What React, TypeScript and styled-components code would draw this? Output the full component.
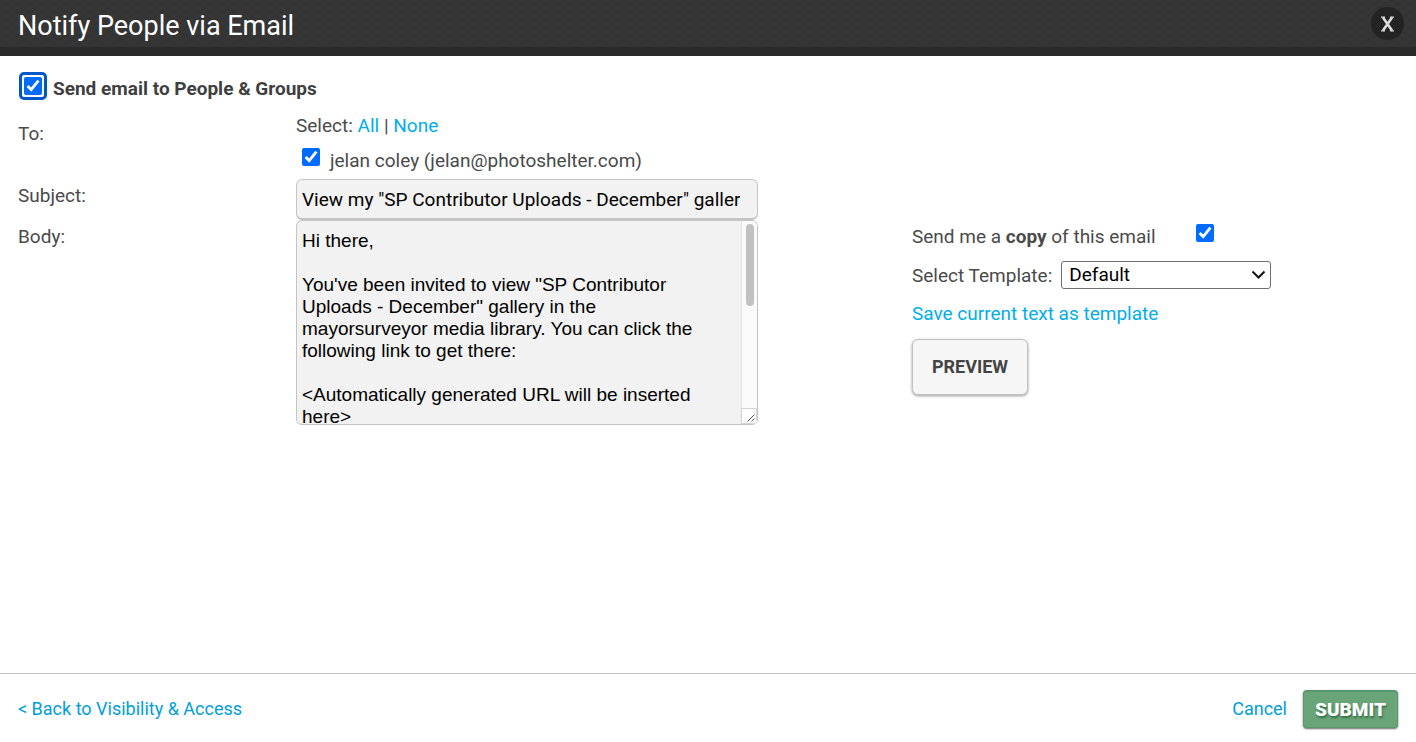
import React, { useState } from 'react';
import styled, { createGlobalStyle } from 'styled-components';

const GlobalStyle = createGlobalStyle`
  *, *::before, *::after { box-sizing: border-box; }
  body {
    margin: 0;
    background: #fff;
    color: #4a4a4a;
    font: 19px/26px Roboto, "Liberation Sans", sans-serif;
  }
`;

const Dialog = styled.form`
  display: flex;
  flex-direction: column;
  min-height: 100vh;
`;

const Header = styled.header`
  display: flex;
  align-items: flex-start;
  justify-content: space-between;
  height: 56px;
  padding: 7px 12px 0 18px;
  border-bottom: 9px solid #2a2a2a;
  background-color: #373737;
  background-image:
    radial-gradient(ellipse at center, #323232 10%, transparent 60%),
    radial-gradient(ellipse at center, #323232 10%, transparent 60%);
  background-size: 12px 8px;
  background-position: 0 0, 6px 4px;
`;

const Title = styled.h1`
  margin: 0;
  color: #fff;
  font-size: 27px;
  font-weight: 400;
  line-height: 38px;
`;

const CloseButton = styled.button`
  display: flex;
  align-items: center;
  justify-content: center;
  width: 33px;
  height: 33px;
  padding: 0;
  border: 0;
  border-radius: 50%;
  background: #232323;
`;

const Main = styled.main`
  flex: 1;
  padding: 16px 18px;
`;

const Check = styled.input.attrs({ type: 'checkbox' })`
  display: block;
  flex: none;
  width: 18px;
  height: 18px;
  margin: 0;
  accent-color: #006bff;
`;

const FocusRing = styled.span`
  flex: none;
  padding: 2px;
  border: 3px solid #0058c8;
  border-radius: 5px;
`;

const SendToggle = styled.label`
  display: flex;
  align-items: flex-start;
  gap: 6px;
  height: 30px;
  padding-left: 1px;
  font-weight: 700;
  color: #3f3f3f;
`;

const SendText = styled.span`
  padding-top: 4px;
`;

const Columns = styled.div`
  display: grid;
  grid-template-columns: 278fr 616fr 486fr;
`;

const FieldLabel = styled.label<{ $pad: number }>`
  padding-top: ${(p) => p.$pad}px;
`;

const Recipients = styled.div`
  height: 77px;
  padding-top: 11px;
`;

const Link = styled.a<{ $dark?: boolean }>`
  color: ${(p) => (p.$dark ? '#009fda' : '#00aeea')};
  text-decoration: none;
`;

const Person = styled.label`
  display: flex;
  gap: 10px;
  padding: 9px 6px 0;
`;

const SubjectInput = styled.input`
  display: block;
  width: 75%;
  height: 41px;
  padding: 0 17px 0 5px;
  border: 1px solid #c4c4c4;
  border-bottom-width: 2px;
  border-radius: 6px;
  background: #f2f2f2;
  color: #000;
  font: 19px/26px Roboto, "Liberation Sans", sans-serif;
`;

const BodyField = styled.div`
  position: relative;
  width: 75%;
  height: 205px;
  overflow: hidden;
  border: 1px solid #c4c4c4;
  border-radius: 6px;
  background: #f2f2f2;
`;

const BodyInput = styled.textarea`
  display: block;
  width: 100%;
  height: 100%;
  padding: 9px 36px 9px 5px;
  border: 0;
  background: transparent;
  color: #000;
  font: 19px/22px "Liberation Sans", Arial, sans-serif;
  resize: none;
  scrollbar-width: none;
`;

const ScrollTrack = styled.div`
  position: absolute;
  top: 0;
  right: 0;
  bottom: 0;
  width: 16px;
  border-left: 1px solid #e2e2e2;
  background: #fafafa;
  pointer-events: none;
`;

const ScrollThumb = styled.div`
  width: 8px;
  height: 82px;
  margin: 3px 0 0 4px;
  border-radius: 4px;
  background: #c1c1c1;
`;

const Grip = styled.svg`
  position: absolute;
  right: 0;
  bottom: 0;
  width: 16px;
  height: 16px;
`;

const Options = styled.div`
  display: flex;
  flex-direction: column;
  align-items: flex-start;
`;

const CopyRow = styled.label`
  display: flex;
  gap: 40px;
  padding-top: 4px;
`;

const TemplateRow = styled.div`
  display: flex;
  gap: 9px;
  margin: 11px 0 12px;
`;

const TemplateLabel = styled.label`
  padding-top: 2px;
`;

const SelectBox = styled.div`
  position: relative;
  width: 210px;
`;

const TemplateSelect = styled.select`
  display: block;
  width: 100%;
  height: 28px;
  padding: 0 24px 0 7px;
  border: 1px solid #6f6f6f;
  border-radius: 3px;
  background-color: #fff;
  color: #000;
  font: 19px/26px Roboto, "Liberation Sans", sans-serif;
  appearance: none;
`;

const Chevron = styled.svg`
  position: absolute;
  top: 9px;
  right: 5px;
  width: 15px;
  height: 10px;
  pointer-events: none;
`;

const PreviewButton = styled.button`
  width: 116px;
  height: 56px;
  margin-top: 12px;
  padding: 0;
  border: 1px solid #c2c2c2;
  border-radius: 6px;
  background: #f6f6f6;
  box-shadow: 0 1px 3px rgba(0, 0, 0, 0.4);
  color: #444;
  font: 700 18px/24px Roboto, "Liberation Sans", sans-serif;
`;

const Footer = styled.footer`
  display: flex;
  align-items: center;
  justify-content: space-between;
  height: 69px;
  padding: 2px 18px 0;
  border-top: 1px solid #c4c4c4;
  font-size: 18px;
`;

const Actions = styled.div`
  display: flex;
  align-items: center;
  gap: 16px;
`;

const SubmitButton = styled.button`
  width: 95px;
  height: 38px;
  padding: 0;
  border: 1px solid #5b976d;
  border-top: 2px solid #5b976d;
  border-radius: 4px;
  background: #6aa57a;
  box-shadow: 0 1px 2px rgba(0, 0, 0, 0.6);
  color: #fff;
  font: 900 19px/24px Roboto, "Liberation Sans", sans-serif;
  text-shadow: 1px 2px 2px rgba(0, 60, 20, 0.5);
`;

const MESSAGE = `Hi there,

You've been invited to view "SP Contributor Uploads - December" gallery in the mayorsurveyor media library. You can click the following link to get there:

<Automatically generated URL will be inserted here>

If the link does not open, copy the full address and paste it into the address bar of your browser.

If you have any questions about this gallery, please reply to this email.

Thanks,
mayorsurveyor
`;

const TRAVEL = 101;

export default function App() {
  const [send, setSend] = useState(true);
  const [person, setPerson] = useState(true);
  const [copy, setCopy] = useState(true);
  const [scroll, setScroll] = useState(0);
  const pick = (on: boolean) => (e: React.MouseEvent) => {
    e.preventDefault();
    setPerson(on);
  };
  const onScroll = (e: React.UIEvent<HTMLTextAreaElement>) => {
    const el = e.currentTarget;
    setScroll(el.scrollTop / Math.max(1, el.scrollHeight - el.clientHeight));
  };

  return (
    <Dialog onSubmit={(e) => e.preventDefault()}>
      <GlobalStyle />
      <Header>
        <Title>Notify People via Email</Title>
        <CloseButton type="button" aria-label="Close">
          <svg width="15" height="16" viewBox="0 0 15 16" fill="none" stroke="#dcdcdc">
            <path d="M3 1.5 12 14.5M12 1.5 3 14.5" strokeWidth="2.6" />
            <path d="M1 1.2h4M10 1.2h4M1 14.8h4M10 14.8h4" strokeWidth="1.2" />
          </svg>
        </CloseButton>
      </Header>

      <Main>
        <SendToggle>
          <FocusRing>
            <Check checked={send} onChange={(e) => setSend(e.target.checked)} />
          </FocusRing>
          <SendText>Send email to People &amp; Groups</SendText>
        </SendToggle>

        <Columns>
          <FieldLabel as="span" $pad={19}>To:</FieldLabel>
          <Recipients>
            Select: <Link href="#all" onClick={pick(true)}>All</Link> |{' '}
            <Link href="#none" onClick={pick(false)}>None</Link>
            <Person>
              <Check checked={person} onChange={(e) => setPerson(e.target.checked)} />
              jelan coley (jelan@photoshelter.com)
            </Person>
          </Recipients>
          <span />

          <FieldLabel htmlFor="subject" $pad={4}>Subject:</FieldLabel>
          <SubjectInput
            id="subject"
            defaultValue={'View my "SP Contributor Uploads - December" gallery'}
          />
          <span />

          <FieldLabel htmlFor="body" $pad={4}>Body:</FieldLabel>
          <BodyField>
            <BodyInput id="body" spellCheck={false} defaultValue={MESSAGE} onScroll={onScroll} />
            <ScrollTrack>
              <ScrollThumb style={{ transform: `translateY(${scroll * TRAVEL}px)` }} />
              <Grip viewBox="0 0 16 16" aria-hidden="true">
                <rect x=".5" y=".5" width="15" height="15" fill="#fff" stroke="#d4d4d4" />
                <path d="M6.5 13.5l7-7M10.5 13.5l3-3" stroke="#555" fill="none" />
              </Grip>
            </ScrollTrack>
          </BodyField>
          <Options>
            <CopyRow>
              <span>Send me a <b>copy</b> of this email</span>
              <Check checked={copy} onChange={(e) => setCopy(e.target.checked)} />
            </CopyRow>
            <TemplateRow>
              <TemplateLabel htmlFor="template">Select Template:</TemplateLabel>
              <SelectBox>
                <TemplateSelect id="template">
                  <option>Default</option>
                </TemplateSelect>
                <Chevron viewBox="0 0 15 10" aria-hidden="true">
                  <path d="M1.5 1.5l6 6 6-6" fill="none" stroke="#111" strokeWidth="2" />
                </Chevron>
              </SelectBox>
            </TemplateRow>
            <Link href="#save">Save current text as template</Link>
            <PreviewButton type="button">PREVIEW</PreviewButton>
          </Options>
        </Columns>
      </Main>

      <Footer>
        <Link $dark href="#back">&lt; Back to Visibility &amp; Access</Link>
        <Actions>
          <Link $dark href="#cancel">Cancel</Link>
          <SubmitButton type="submit">SUBMIT</SubmitButton>
        </Actions>
      </Footer>
    </Dialog>
  );
}
